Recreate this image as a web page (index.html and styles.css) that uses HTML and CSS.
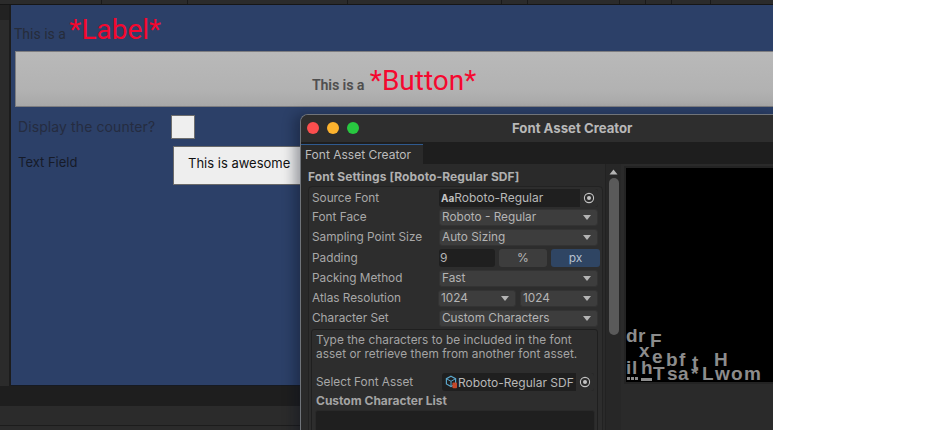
FILE: index.html
```html
<!DOCTYPE html>
<html lang="en">
<head>
<meta charset="utf-8">
<title>Font Asset Creator</title>
<link rel="stylesheet" href="styles.css">
</head>
<body>
<div class="stage">
  <div class="top-strip">
    <span class="tick t1"></span><span class="tick t2"></span><span class="tick t3"></span><span class="tick t4"></span><span class="tick t5"></span><span class="tick t6"></span><span class="tick t7"></span><span class="tick t8"></span><span class="tick t9"></span>
  </div>
  <div class="middle">
    <div class="left-rail"><div class="rail-top"></div></div>
    <div class="game">
      <div class="label-row"><span class="small">This is a </span><span class="big">*Label*</span></div>
      <div class="big-button"><span class="small ghost">This is a </span><span class="big">*Button*</span></div>
      <div class="counter-row"><span class="counter-label">Display the counter?</span><span class="check"></span></div>
      <div class="field-row"><span class="field-label">Text Field</span><span class="field">This is awesome</span></div>
    </div>
  </div>
  <div class="bar-dark"></div>
  <div class="bar-mid"></div>
  <div class="bar-foot"></div>

  <section class="window">
    <header class="titlebar">
      <span class="light red"></span><span class="light amber"></span><span class="light green"></span>
      <span class="title">Font Asset Creator</span>
    </header>
    <div class="tabbar"><span class="tab">Font Asset Creator</span></div>
    <div class="body">
      <div class="settings">
        <div class="heading">Font Settings [Roboto-Regular SDF]</div>
        <div class="group">
          <div class="row">
            <span class="name">Source Font</span>
            <span class="objfield"><span class="aa">Aa</span><span class="objtext">Roboto-Regular</span><span class="picker"><svg width="12" height="12" viewBox="0 0 12 12"><circle cx="6" cy="6" r="4.6" fill="none" stroke="#c4c4c4" stroke-width="1.1"/><circle cx="6" cy="6" r="2" fill="#c4c4c4"/></svg></span></span>
          </div>
          <div class="row"><span class="name">Font Face</span><span class="drop"><span>Roboto - Regular</span><i class="caret"></i></span></div>
          <div class="row"><span class="name">Sampling Point Size</span><span class="drop"><span>Auto Sizing</span><i class="caret"></i></span></div>
          <div class="row tall">
            <span class="name">Padding</span>
            <span class="split">
              <span class="num">9</span><span class="seg">%</span><span class="seg on">px</span>
            </span>
          </div>
          <div class="row"><span class="name">Packing Method</span><span class="drop"><span>Fast</span><i class="caret"></i></span></div>
          <div class="row">
            <span class="name">Atlas Resolution</span>
            <span class="pair"><span class="drop"><span>1024</span><i class="caret"></i></span><span class="drop"><span>1024</span><i class="caret"></i></span></span>
          </div>
          <div class="row"><span class="name">Character Set</span><span class="drop"><span>Custom Characters</span><i class="caret"></i></span></div>
          <div class="help">
            <p>Type the characters to be included in the font asset or retrieve them from another font asset.</p>
            <div class="asset-row">
              <span class="name">Select Font Asset</span>
              <span class="objfield asset">
                <svg class="cube" width="13" height="14" viewBox="0 0 13 14"><path d="M6 1.2l4.6 2.5v5.2L6 11.5 1.4 8.9V3.7z" fill="none" stroke="#5aa5c9" stroke-width="1.2"/><path d="M1.4 3.7L6 6.3l4.6-2.6M6 6.3v5.2" fill="none" stroke="#5aa5c9" stroke-width="1"/><rect x="7.4" y="7.6" width="4.6" height="5.6" rx="1" fill="#c4492b"/></svg>
                <span class="objtext">Roboto-Regular SDF</span>
                <span class="picker"><svg width="12" height="12" viewBox="0 0 12 12"><circle cx="6" cy="6" r="4.6" fill="none" stroke="#c4c4c4" stroke-width="1.1"/><circle cx="6" cy="6" r="2" fill="#c4c4c4"/></svg></span>
              </span>
            </div>
            <div class="list-title">Custom Character List</div>
            <div class="textarea"></div>
          </div>
        </div>
      </div>
      <div class="scroll">
        <svg class="up" width="9" height="6" viewBox="0 0 9 6"><path d="M4.5 0.5L8.5 5.5H0.5z" fill="#b5b5b5"/></svg>
        <div class="thumb"></div>
      </div>
      <div class="preview">
        <div class="atlas">
          <span class="g" style="left:0;top:158px">d</span>
          <span class="g" style="left:12px;top:158px">r</span>
          <span class="g" style="left:24px;top:163px">F</span>
          <span class="g" style="left:13px;top:173px">x</span>
          <span class="g" style="left:26px;top:179px">e</span>
          <span class="g" style="left:40px;top:182px">b</span>
          <span class="g" style="left:53px;top:182px">f</span>
          <span class="g" style="left:66px;top:185px">t</span>
          <span class="g" style="left:88px;top:182px">H</span>
          <span class="g" style="left:0;top:190px">i</span>
          <span class="g" style="left:6px;top:190px">l</span>
          <span class="g" style="left:15px;top:190px">h</span>
          <span class="g" style="left:27px;top:196px">T</span>
          <span class="g" style="left:41px;top:196px">s</span>
          <span class="g" style="left:52px;top:196px">a</span>
          <span class="g" style="left:65px;top:196px">*</span>
          <span class="g" style="left:76px;top:196px">L</span>
          <span class="g" style="left:89px;top:196px">w</span>
          <span class="g" style="left:105px;top:196px">o</span>
          <span class="g" style="left:118px;top:196px">m</span>
          <span class="bar" style="left:1px;top:209px;width:3px"></span>
          <span class="bar" style="left:5px;top:209px;width:3px"></span>
          <span class="bar" style="left:9px;top:209px;width:3px"></span>
          <span class="bar" style="left:15px;top:210px;width:11px"></span>
        </div>
      </div>
    </div>
  </section>
</div>
</body>
</html>
```
FILE: styles.css
```css
* { box-sizing: border-box; }
html, body { margin: 0; padding: 0; background: #fff; }
body { width: 932px; height: 430px; overflow: hidden; font-family: Inter, "Liberation Sans", sans-serif; }

.stage { position: relative; width: 773px; height: 430px; overflow: hidden; background: #2a2a2a; display: flex; flex-direction: column; }

.top-strip { position: relative; height: 5px; flex: none; background: #2b2b2b; border-bottom: 1px solid #161616; }
.tick { position: absolute; top: 0; width: 1px; height: 4px; background: #1a1a1a; }
.t1 { left: 101px; } .t2 { left: 187px; } .t3 { left: 347px; } .t4 { left: 501px; } .t5 { left: 527px; } .t6 { left: 619px; } .t7 { left: 645px; } .t8 { left: 671px; } .t9 { left: 710px; }

.middle { display: flex; height: 381px; flex: none; }
.left-rail { width: 11px; flex: none; background: #2b2b2b; border-right: 2px solid #1c1c1c; }
.rail-top { height: 15px; background: #222; }
.game { flex: 1; background: #2c4068; padding: 0 0 0 4px; min-width: 0; border-bottom: 1px solid #161a22; }

.label-row { height: 46px; display: flex; align-items: baseline; padding-top: 11px; margin-left: -1px; line-height: 1; white-space: pre; }
.small { font-family: Roboto, sans-serif; font-size: 14px; color: #262c3a; }
.big { font-family: Roboto, sans-serif; font-size: 28px; color: #f5082f; }

.big-button { width: 100%; height: 56px; background: linear-gradient(#b9b9b9, #b2b2b2 70%, #a8a8a8); border: 1px solid #7d7d80; border-right: 0; display: flex; align-items: baseline; padding: 15px 0 0 296px; white-space: pre; line-height: 1; }
.big-button .big { margin-left: 2px; }
.ghost { color: #4e4e4e; font-weight: 500; text-shadow: 0.5px 0 rgba(90, 90, 90, .45); }

.counter-row { height: 39px; display: flex; align-items: flex-start; padding: 8px 0 0 3px; }
.counter-label { width: 153px; font-size: 14px; line-height: 24px; color: #252c40; letter-spacing: 0.1px; }
.check { width: 24px; height: 24px; background: #efefef; border: 1px solid #6e6e6e; }

.field-row { display: flex; align-items: flex-start; padding: 0 0 0 3px; }
.field-label { width: 155px; margin-top: 8px; font-size: 13px; line-height: 16px; color: #161b29; }
.field { width: 130px; height: 39px; background: #eee; border: 1px solid #6a6a6a; font-size: 13px; color: #111; display: flex; align-items: center; padding: 0 0 6px 14px; white-space: nowrap; }

.bar-dark { height: 20px; flex: none; background: #1e1e1e; }
.bar-mid { height: 20px; flex: none; background: #2b2b2b; border-bottom: 1px solid #1c1c1c; }
.bar-foot { flex: 1; background: #2b2b2b; }

.window { position: absolute; left: 300px; top: 114px; width: 480px; height: 330px; background: #2a2a2a; border: 1px solid #70747a; border-width: 1px 0 0 1px; border-radius: 8px 0 0 0; box-shadow: -6px 0 12px rgba(10, 15, 30, .35); color: #b4b4b4; font-size: 12px; overflow: hidden; }

.titlebar { position: relative; height: 27px; background: #2e2e2e; display: flex; align-items: center; padding: 0 0 1px 6px; gap: 8px; }
.light { width: 12px; height: 12px; border-radius: 50%; }
.red { background: #fb4e4e; } .amber { background: #fdb32e; } .green { background: #28c840; }
.title { position: absolute; left: 211px; top: 5px; font-size: 13.2px; font-weight: 700; color: #b8b8b8; white-space: nowrap; }

.tabbar { height: 22px; padding-top: 2px; background: #1e1e1e; }
.tab { display: block; height: 20px; width: 122px; background: #2a2a2a; border-top: 1px solid #2f5a8f; padding: 1px 0 0 4px; font-size: 12px; line-height: 17px; color: #bcbcbc; white-space: nowrap; }

.body { display: flex; height: 280px; }
.settings { width: 304px; flex: none; padding: 5px 0 0 7px; }
.heading { font-size: 12px; font-weight: 700; color: #b0b0b0; line-height: 15px; letter-spacing: .1px; margin-bottom: 2px; white-space: nowrap; }

.group { width: 295px; background: #2d2d2d; border: 1px solid #222; border-radius: 4px; padding: 1px 4px 0 3px; height: 260px; }
.row { display: flex; align-items: center; height: 20px; }
.row:nth-child(1) { height: 19px; }
.row.tall { height: 21px; }
.name { width: 127px; flex: none; font-size: 11.8px; color: #a8a8a8; white-space: nowrap; }

.objfield { flex: 1; height: 18px; background: #1f1f1f; border-radius: 3px; display: flex; align-items: center; padding-left: 2px; font-size: 12px; color: #b8b8b8; overflow: hidden; }
.aa { font-size: 10px; font-weight: 700; color: #c4c4c4; }
.objtext { flex: 1; white-space: nowrap; overflow: hidden; }
.picker { width: 18px; height: 18px; flex: none; background: #2d2d2d; display: flex; align-items: center; justify-content: center; }

.drop { flex: 1; height: 17px; background: #3d3d3d; border: 1px solid #333; border-radius: 3px; display: flex; align-items: center; justify-content: space-between; padding: 0 6px 0 2px; font-size: 11.8px; color: #b4b4b4; white-space: nowrap; min-width: 0; }
.caret { width: 0; height: 0; border-left: 4px solid transparent; border-right: 4px solid transparent; border-top: 5px solid #b4b4b4; }

.split { flex: 1; display: flex; gap: 4px; height: 18px; }
.num { width: 56px; background: #1f1f1f; border-radius: 3px; font-size: 12px; padding-left: 1px; line-height: 18px; }
.seg { width: 48px; background: #3d3d3d; border-radius: 3px; text-align: center; font-size: 12px; line-height: 18px; color: #b8b8b8; }
.seg.on { width: 49px; background: #2f4563; color: #b8c2d0; }

.pair { flex: 1; display: flex; gap: 4px; margin-left: -1px; }
.pair .drop:first-child { flex: 0 0 78px; }

.help { width: 287px; height: 120px; margin: 1px 0 0 -1px; background: #2d2d2d; border: 1px solid #1f1f1f; border-radius: 3px; padding: 3px 4px 0 4px; }
.help p { margin: 0; font-size: 11.8px; line-height: 14px; color: #a4a4a4; letter-spacing: .05px; width: 270px; }
.asset-row { display: flex; align-items: center; margin-top: 12px; height: 18px; }
.asset-row .name { width: 126px; }
.asset { flex: none; width: 152px; height: 18px; padding-left: 3px; }
.cube { flex: none; }
.list-title { font-size: 12px; font-weight: 700; color: #a4a4a4; margin-top: 2px; line-height: 16px; }
.textarea { height: 30px; background: #1f1f1f; border: 1px solid #292929; border-radius: 3px; margin: 1px -2px 0 -1px; }

.scroll { width: 16px; flex: none; background: #272727; display: flex; flex-direction: column; align-items: center; padding-top: 5px; gap: 3px; border-left: 1px solid #222; }
.up { flex: none; }
.thumb { width: 10px; height: 157px; background: #5a5a5a; border-radius: 5px; }

.preview { flex: 1; padding: 2px 0 0 3px; }
.atlas { position: relative; height: 218px; background: #000; border: 2px solid #232323; border-right: 0; overflow: hidden; }
.g { position: absolute; font-family: "Liberation Sans", sans-serif; font-weight: 700; font-size: 19px; line-height: 1; color: #8c8c8c; }
.bar { position: absolute; height: 3px; background: #8c8c8c; }
```
